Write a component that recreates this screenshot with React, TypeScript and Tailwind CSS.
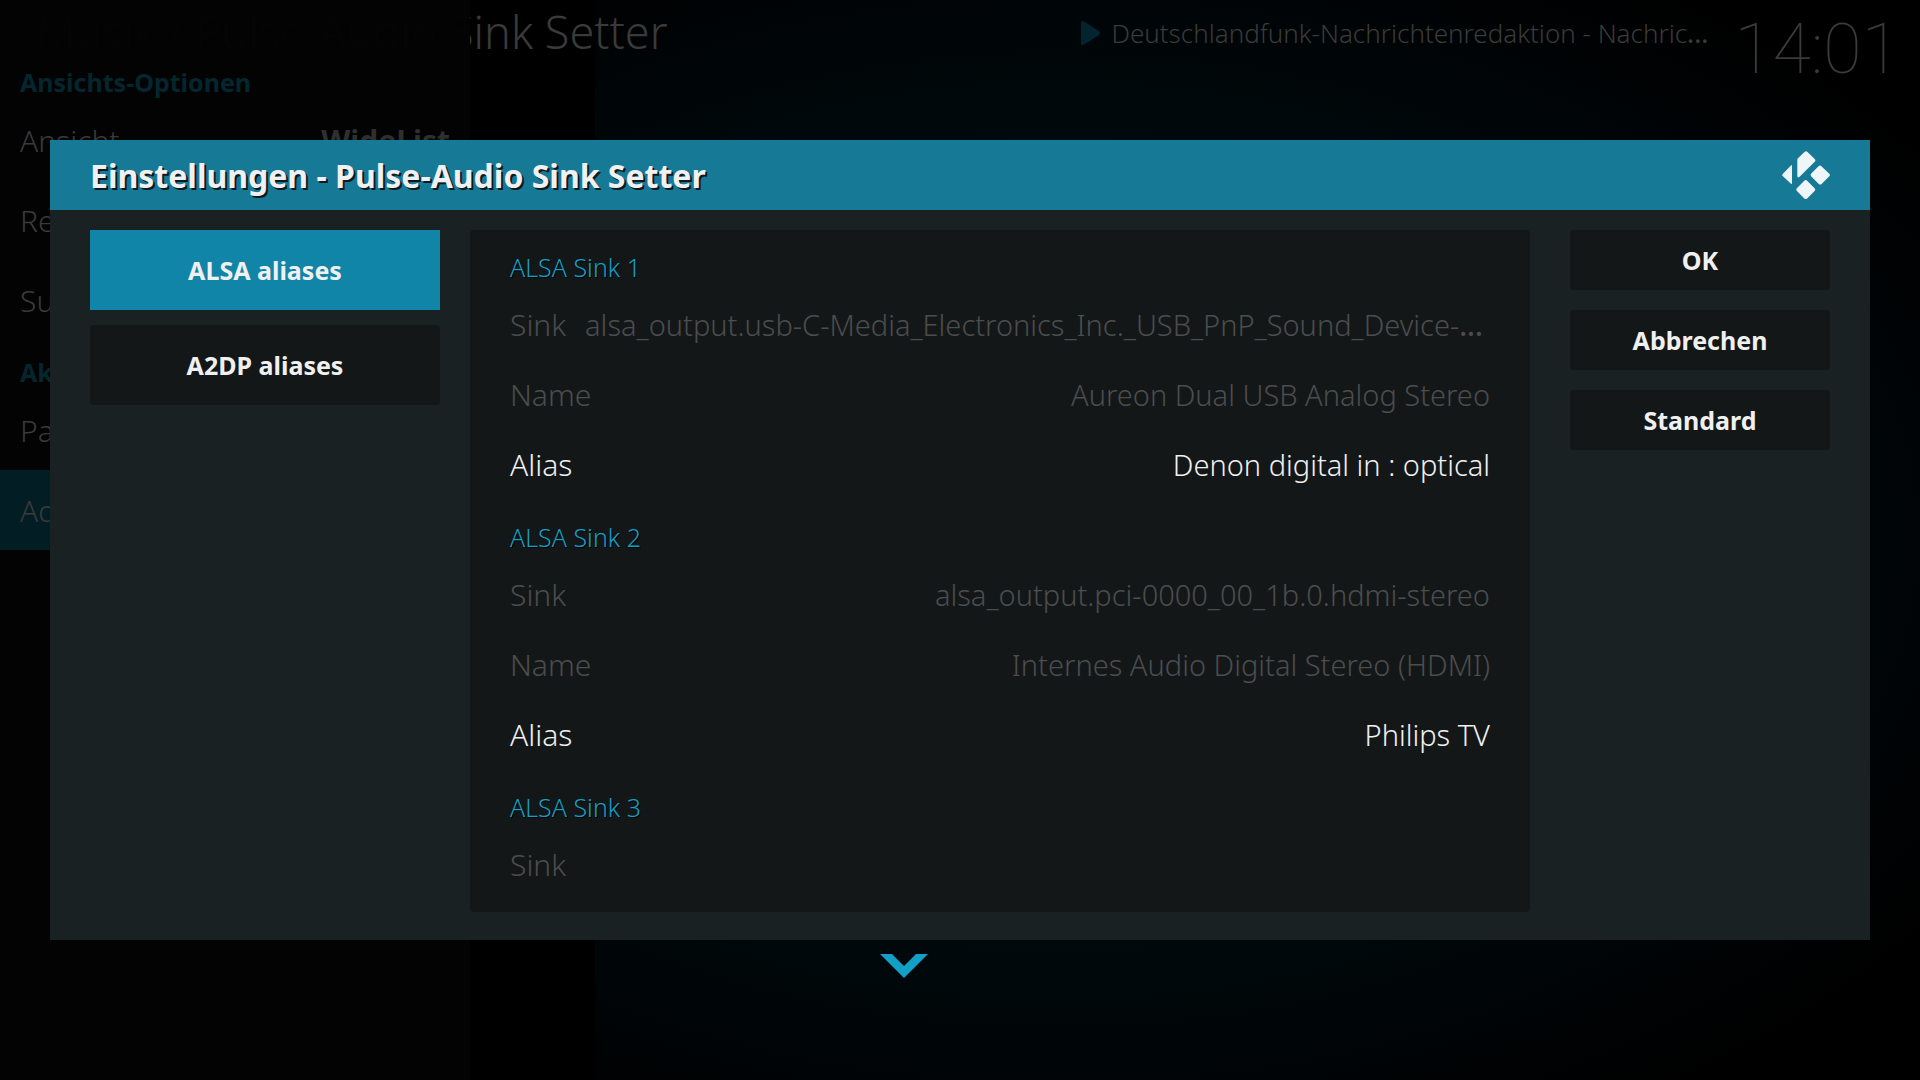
type Setting = { label: string; value?: string; disabled?: boolean; shortened?: boolean };

const groups: { title: string; settings: Setting[] }[] = [
  {
    title: "ALSA Sink 1",
    settings: [
      {
        label: "Sink",
        value: "alsa_output.usb-C-Media_Electronics_Inc._USB_PnP_Sound_Device-",
        disabled: true,
        shortened: true,
      },
      { label: "Name", value: "Aureon Dual USB Analog Stereo", disabled: true },
      { label: "Alias", value: "Denon digital in : optical" },
    ],
  },
  {
    title: "ALSA Sink 2",
    settings: [
      { label: "Sink", value: "alsa_output.pci-0000_00_1b.0.hdmi-stereo", disabled: true },
      { label: "Name", value: "Internes Audio Digital Stereo (HDMI)", disabled: true },
      { label: "Alias", value: "Philips TV" },
    ],
  },
  { title: "ALSA Sink 3", settings: [{ label: "Sink", disabled: true }] },
];

function KodiLogo() {
  return (
    <svg viewBox="0 0 48 48" className="size-12 fill-[#eef6f9]" aria-hidden="true">
      <path d="M9.2 14.2Q10 13.4 10 15V32Q10 33.600 9 32.700L.7 25Q-.3 24 .7 23Z" />
      <path d="M15.300 9.200Q15.300 8 16.200 7.100L22.500.9Q24 -.4 25.500.9L32.700 8.100Q34 9.500 32.700 10.800L17.600 25.800Q15.300 27.500 15.300 24.500Z" />
      <path d="M36.600 15.200Q38 13.800 39.400 15.200L47.300 22.700Q48.600 24 47.300 25.300L39.600 32.900Q38.200 34.200 36.800 32.900L29.300 25.400Q28 24 29.300 22.600Z" />
      <path d="M22.300 29.700Q23.700 28.400 25.100 29.700L32.600 37.200Q33.900 38.600 32.600 40L25.100 47.400Q23.700 48.700 22.300 47.400L14.900 40Q13.600 38.600 14.900 37.200Z" />
    </svg>
  );
}

function NavHeading({ children }: { children: string }) {
  return <h2 className="h-[50px] px-5 pt-[15px] text-[25px] leading-[34px] font-bold text-[#04262f]">{children}</h2>;
}

function NavItem({ label, value, active }: { label: string; value?: string; active?: boolean }) {
  return (
    <button
      className={`flex h-20 w-full items-center justify-between px-5 text-left text-[30px] font-light text-[#3a3a3a] ${
        active ? "bg-[#031d24]" : ""
      }`}
    >
      <span>{label}</span>
      {value && <span className="font-bold text-[#2f2f2f]">{value}</span>}
    </button>
  );
}

function SettingRow({ label, value, disabled, shortened }: Setting) {
  return (
    <button
      disabled={disabled}
      className="flex h-[70px] w-full items-baseline justify-between gap-[19px] text-left text-[30px] leading-[70px] font-light whitespace-nowrap text-[#f0f0f0] disabled:text-[#4b4d4e]"
    >
      <span>{label}</span>
      {value && (
        <span className={`text-[29px] ${shortened ? "flex-1" : ""}`}>
          {value}
          {shortened && <span className="font-medium">...</span>}
        </span>
      )}
    </button>
  );
}

function ActionButton({ children }: { children: string }) {
  return (
    <button className="h-[60px] w-full rounded-sm bg-[#141718] pt-0.5 text-[25px] font-bold text-[#f0f0f0]">
      {children}
    </button>
  );
}

export default function App() {
  return (
    <div className="relative flex min-h-screen overflow-hidden bg-black font-['Noto_Sans',sans-serif]">
      <aside className="relative z-10 w-[470px] shrink-0 bg-[#030303]/98 pt-[50px]">
        <nav>
          <NavHeading>Ansichts-Optionen</NavHeading>
          <NavItem label="Ansicht" value="WideList" />
          <NavItem label="Reihenfolge" />
          <NavItem label="Suchen" />
          <NavHeading>Aktionen</NavHeading>
          <NavItem label="Partymodus" />
          <NavItem label="Add-on" active />
        </nav>
      </aside>

      <div className="flex min-w-0 flex-1">
        <div className="w-[125px] shrink-0 bg-linear-to-b from-black via-[#010404] to-black" />
        <div className="flex-1 bg-[radial-gradient(ellipse_80%_62%_at_35%_50%,#001015_0%,#00080b_65%,#000000_100%)]" />
      </div>

      <header className="absolute inset-x-0 top-0 flex items-start justify-between pr-5 pl-9 text-[#3a3a3a]">
        <h1 className="text-[45px] leading-[64px] font-light whitespace-nowrap">Musik / Pulse-Audio Sink Setter</h1>
        <div className="flex items-start">
          <p className="mr-[26px] flex items-center gap-2.5 text-[26px] leading-[66px] font-light whitespace-nowrap">
            <svg viewBox="0 0 20 26" className="h-[26px] w-5 fill-[#03252f]" aria-hidden="true">
              <path d="M0 3Q0 0 3 1.500L18 11Q20 13 18 15L3 24.500Q0 26 0 23Z" />
            </svg>
            <span>
              Deutschlandfunk-Nachrichtenredaktion - Nachric<span className="font-medium">...</span>
            </span>
          </p>
          <time className="font-[Roboto] text-[70px] leading-[98px] font-thin">14:01</time>
        </div>
      </header>

      <div className="absolute inset-0 z-20 flex items-center px-[50px]">
        <section role="dialog" aria-labelledby="dialog-title" className="relative w-full bg-[#1a2123]">
          <header className="flex h-[70px] items-center justify-between bg-[#167a97] px-10">
            <h2
              id="dialog-title"
              className="pt-0.5 text-[32px] font-bold text-[#f0f0f0] [text-shadow:2px_2px_0_#0a1a20]"
            >
              Einstellungen - Pulse-Audio Sink Setter
            </h2>
            <KodiLogo />
          </header>

          <div className="flex px-10 pt-5 pb-7">
            <div role="tablist" className="mr-[30px] flex w-[350px] shrink-0 flex-col gap-[15px]">
              <button
                role="tab"
                aria-selected="true"
                className="h-20 bg-[#1085a7] pt-0.5 text-[25px] font-bold text-[#f0f0f0]"
              >
                ALSA aliases
              </button>
              <button
                role="tab"
                aria-selected="false"
                className="h-20 rounded-sm bg-[#141718] pt-0.5 text-[25px] font-bold text-[#f0f0f0]"
              >
                A2DP aliases
              </button>
            </div>

            <div className="min-w-0 flex-1 rounded-sm bg-[#141718] px-10 pb-3">
              {groups.map((group) => (
                <section key={group.title}>
                  <h3 className="h-[60px] pt-5 text-[25px] leading-[34px] font-light text-[#12a0c7] [text-shadow:1px_1px_0_#000000]">
                    {group.title}
                  </h3>
                  {group.settings.map((setting) => (
                    <SettingRow key={setting.label} {...setting} />
                  ))}
                </section>
              ))}
            </div>

            <div className="ml-10 flex w-[260px] shrink-0 flex-col gap-5">
              <ActionButton>OK</ActionButton>
              <ActionButton>Abbrechen</ActionButton>
              <ActionButton>Standard</ActionButton>
            </div>
          </div>

          <button aria-label="Nach unten" className="absolute top-full left-[830px] mt-3.5">
            <svg viewBox="0 0 48 24" className="h-6 w-12 fill-[#12a0c7]" aria-hidden="true">
              <path d="M0 0H12L24 12L36 0H48L24 24Z" />
            </svg>
          </button>
        </section>
      </div>
    </div>
  );
}
